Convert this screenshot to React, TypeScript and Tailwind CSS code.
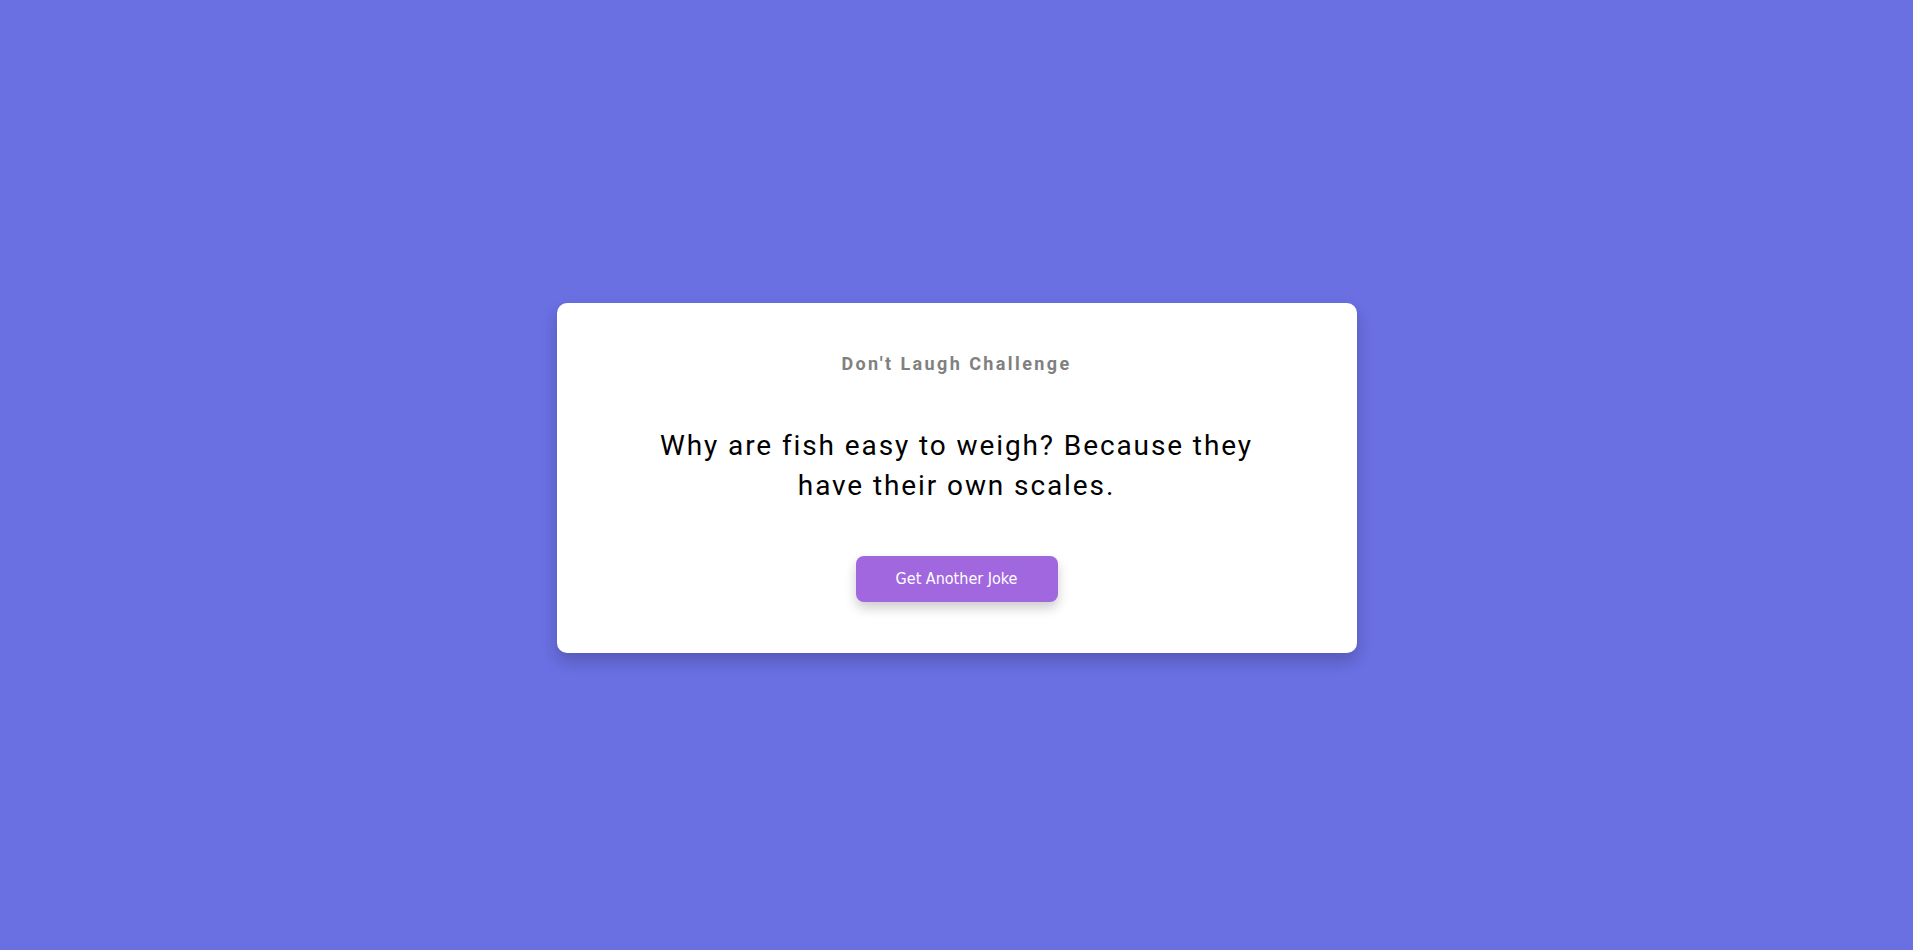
export default function App() {
  return (
    <div className="min-h-screen w-full bg-[#6a6fe2] flex items-center justify-center pt-[5px]">
      <div className="w-[800px] h-[350px] bg-white rounded-[10px] shadow-[0_8px_16px_rgba(0,0,0,0.2)] flex flex-col items-center pt-[49px]">
        <h2 className="font-['Roboto',sans-serif] font-bold text-[18px] leading-[24px] tracking-[2.4px] text-[#808080]">
          Don't Laugh Challenge
        </h2>
        <p className="mt-[50px] max-w-[640px] text-center font-['Roboto',sans-serif] text-[28px] leading-[40px] tracking-[1.9px] text-black">
          Why are fish easy to weigh? Because they have their own scales.
        </p>
        <button className="mt-[50px] w-[202px] h-[46px] rounded-[8px] bg-[#a067df] text-white text-[16px] font-['DejaVu_Sans_Condensed','DejaVu_Sans',sans-serif] shadow-[0_6px_12px_rgba(0,0,0,0.2)]">
          Get Another Joke
        </button>
      </div>
    </div>
  );
}
